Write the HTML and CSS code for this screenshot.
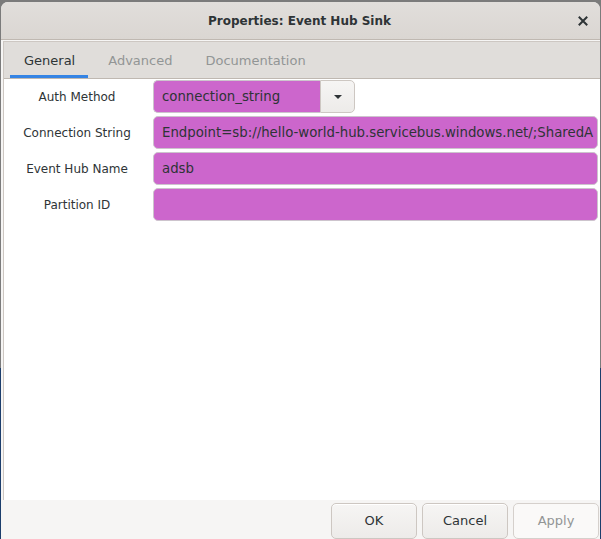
FILE: index.html
```html
<!DOCTYPE html>
<html>
<head>
<meta charset="utf-8">
<link rel="stylesheet" href="styles.css">
</head>
<body>
<div class="window">
  <div class="titlebar">
    <span class="title">Properties: Event Hub Sink</span>
    <span class="close"><svg width="10" height="10" viewBox="0 0 10 10"><path d="M1.5 1.5 L8.5 8.5 M8.5 1.5 L1.5 8.5" stroke="#2e3436" stroke-width="2" stroke-linecap="square"/></svg></span>
  </div>
  <div class="content">
    <div class="notebook">
      <div class="tabs">
        <div class="tab active">General</div>
        <div class="tab">Advanced</div>
        <div class="tab">Documentation</div>
      </div>
      <div class="page">
        <div class="form">
          <div class="label">Auth Method</div>
          <div class="combo">
            <div class="combo-entry">connection_string</div>
            <div class="combo-btn"><svg width="10" height="6" viewBox="0 0 10 6"><path d="M1 1 L9 1 L5 5 Z" fill="#2e3436"/></svg></div>
          </div>
          <div class="label">Connection String</div>
          <div class="entry"><span class="clip">Endpoint=sb://hello-world-hub.servicebus.windows.net/;SharedA</span></div>
          <div class="label">Event Hub Name</div>
          <div class="entry">adsb</div>
          <div class="label">Partition ID</div>
          <div class="entry"></div>
        </div>
      </div>
    </div>
    <div class="actions">
      <button class="btn">OK</button>
      <button class="btn">Cancel</button>
      <button class="btn disabled">Apply</button>
    </div>
  </div>
</div>
</body>
</html>
```
FILE: styles.css
```css
html, body {
  margin: 0;
  padding: 0;
}
body {
  width: 601px;
  height: 539px;
  overflow: hidden;
  background: linear-gradient(to bottom, #7b7b7b 0, #7b7b7b 368px, #1c3e6c 368px);
  font-family: "DejaVu Sans", sans-serif;
  color: #2e3436;
}
.window {
  margin: 2px 0 0 1px;
  width: 599px;
  height: 537px;
  border-radius: 7px 7px 0 0;
  overflow: hidden;
  background: #f6f5f4;
  display: flex;
  flex-direction: column;
}
.titlebar {
  height: 37px;
  flex: none;
  background: linear-gradient(to bottom, #e1dedb, #dad6d2);
  border-bottom: 1px solid #bfb8b1;
  display: flex;
  align-items: center;
  justify-content: center;
  position: relative;
}
.title {
  font-size: 12px;
  font-weight: bold;
  color: #2e3436;
  margin-left: -2px;
}
.close {
  position: absolute;
  left: 577px;
  top: 14px;
  width: 10px;
  height: 10px;
  display: flex;
}
.content {
  flex: 1;
  display: flex;
  flex-direction: column;
  padding: 1px 0 0 2px;
  min-height: 0;
}
.notebook {
  flex: 1;
  display: flex;
  flex-direction: column;
  border-left: 1px solid #cdc7c2;
  border-top: 1px solid #cdc7c2;
  min-height: 0;
}
.tabs {
  height: 36px;
  flex: none;
  background: #e0ddda;
  border-bottom: 1px solid #bfb8b1;
  display: flex;
  padding-left: 6px;
  gap: 7px;
}
.tab {
  font-size: 13px;
  color: #929595;
  padding: 0 13px;
  display: flex;
  align-items: center;
  border-bottom: 3px solid transparent;
  padding-top: 3px;
}
.tab.active {
  color: #2e3436;
  border-bottom-color: #3584e4;
  padding: 3px 13px 0 14px;
}
.page {
  flex: 1;
  background: #ffffff;
  padding-top: 1px;
}
.form {
  display: grid;
  grid-template-columns: 136px 445px;
  grid-auto-rows: 33px;
  column-gap: 8px;
  row-gap: 3px;
  margin-left: 5px;
}
.label {
  font-size: 12px;
  text-align: center;
  display: flex;
  align-items: center;
  justify-content: center;
  color: #2e3436;
}
.entry, .combo-entry {
  background: #cc66cc;
  border: 1px solid #cdc4cd;
  border-radius: 5px;
  font-size: 13.3px;
  color: #2e3436;
  padding: 0 8px;
  display: flex;
  align-items: center;
  white-space: nowrap;
  overflow: hidden;
  box-sizing: border-box;
}
.clip {
  white-space: nowrap;
}
.combo {
  display: flex;
  width: 202px;
}
.combo-entry {
  flex: 1;
  border-radius: 5px 0 0 5px;
  border-right: none;
}
.combo-btn {
  width: 35px;
  box-sizing: border-box;
  background: linear-gradient(to bottom, #f6f5f4, #edebe9);
  border: 1px solid #cdc7c2;
  border-radius: 0 5px 5px 0;
  display: flex;
  align-items: center;
  justify-content: center;
}
.actions {
  height: 36px;
  flex: none;
  display: flex;
  justify-content: flex-end;
  align-items: flex-start;
  gap: 5px;
  padding: 3px 1px 0 0;
  background: #f6f5f4;
}
.btn {
  width: 86px;
  height: 36px;
  font-family: "DejaVu Sans", sans-serif;
  font-size: 13px;
  color: #2e3436;
  background: linear-gradient(to bottom, #f6f5f4, #edebe9);
  border: 1px solid #cdc7c2;
  border-radius: 5px;
  padding: 0 0 2px 0;
  box-shadow: inset 0 1px #ffffff;
}
.btn.disabled {
  color: #929595;
  background: #faf9f8;
  border-color: #d5d0cc;
  box-shadow: none;
}
```
